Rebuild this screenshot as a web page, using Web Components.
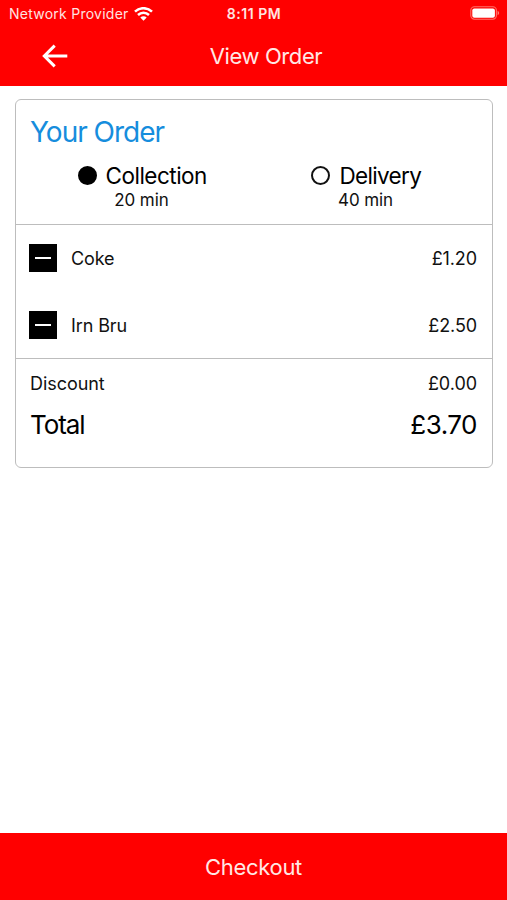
<!DOCTYPE html>
<html lang="en">
<head>
<meta charset="utf-8">
<title>View Order</title>
<style>
html, body { margin: 0; height: 100%; }
body { background: #fff; color: #111; font-family: Inter, "Liberation Sans", sans-serif; }
</style>
</head>
<body>
<order-screen></order-screen>
<script>
const define = (name, html) => customElements.define(name, class extends HTMLElement {
  constructor() {
    super();
    this.attachShadow({ mode: "open" }).innerHTML = html;
  }
});

define("status-bar", `
<style>
:host { display: grid; grid-template-columns: 1fr auto 1fr; align-items: center; height: 27px; padding: 0 7px 0 9px; color: #ffe3e0; font-size: 14px; line-height: 27px; }
.left { display: flex; align-items: center; gap: 5px; }
.left svg, .battery { margin-top: -1px; }
.carrier { letter-spacing: .25px; line-height: 26px; }
.time { font-weight: 600; font-size: 14px; letter-spacing: .55px; line-height: 28px; margin-left: -1px; }
.battery { justify-self: end; }
svg { display: block; }
</style>
<div class="left"><span class="carrier">Network Provider</span>
<svg width="19" height="14" viewBox="0 0 19 14" fill="none" stroke="#fff" stroke-width="2.5"><path d="M1 4.7C5.8 0 13.2 0 18 4.7M4 8c3.1-3 7.9-3 11 0"/><path d="M6.3 10.4c1.8-1.7 4.6-1.7 6.4 0L9.5 13.7z" fill="#fff" stroke="none"/></svg></div>
<span class="time">8:11 PM</span>
<svg class="battery" width="30" height="15" viewBox="0 0 30 15"><rect x=".8" y=".8" width="25.6" height="12.4" rx="3.6" fill="none" stroke="#ff7068" stroke-width="1.1"/><rect x="2.3" y="2.5" width="22.6" height="9.2" rx="2" fill="#fff"/><path d="M27.6 4.8c2 .8 2 3.6 0 4.4z" fill="#ff8078"/></svg>`);

define("nav-bar", `
<style>
:host { display: grid; grid-template-columns: 1fr auto 1fr; align-items: center; height: 59px; padding: 0 17px 0 42px; box-sizing: border-box; color: #ffe8e5; font-size: 22px; line-height: 59px; letter-spacing: -.4px; }
svg { display: block; margin-top: -2px; }
</style>
<svg width="26" height="24" viewBox="0 0 26 24" fill="none" stroke="#fff" stroke-width="3"><path d="M25.3 12H3M12.7 1.6L2.3 12l10.4 10.4"/></svg>
<span><slot></slot></span>`);

define("pick-option", `
<style>
:host { display: flex; flex-direction: column; align-items: center; color: #000; }
.row { display: flex; align-items: center; gap: 9.5px; font-size: 22.5px; line-height: 28px; letter-spacing: -.5px; }
.dot { width: 19px; height: 19px; box-sizing: border-box; border: 2px solid #111; border-radius: 50%; margin: -1px -.5px 0 .5px; }
:host([checked]) .dot { background: #000; border-color: #000; }
:host(:not([checked])) .name { letter-spacing: -.65px; }
.time { font-size: 17px; line-height: 21px; color: #111; letter-spacing: -.1px; padding-right: 1px; }
</style>
<div class="row"><span class="dot"></span><span class="name"><slot></slot></span></div>
<div class="time"><slot name="time"></slot></div>`);

define("order-item", `
<style>
:host { display: flex; align-items: center; height: 67px; font-size: 18px; padding: 0 15px 0 13px; letter-spacing: -.1px; }
.minus { width: 28px; height: 28px; background: #000; display: grid; place-items: center; margin: -1px 14px 0 0; }
.minus i { width: 16px; height: 2px; background: #fff; }
.name { flex: 1; }
</style>
<span class="minus"><i></i></span><span class="name"><slot></slot></span><span><slot name="price"></slot></span>`);

define("sum-row", `
<style>
:host { display: flex; justify-content: space-between; font-size: 18px; line-height: 36px; padding: 0 15px 0 14px; letter-spacing: -.05px; }
:host([total]) { font-size: 26px; line-height: 45px; color: #000; }
:host([total]) .label { letter-spacing: -1.1px; }
:host([total]) .price { letter-spacing: -.5px; }
</style>
<span class="label"><slot></slot></span><span class="price"><slot name="price"></slot></span>`);

define("order-card", `
<style>
:host { display: block; box-sizing: border-box; margin: 13px 14px 0 15px; height: 369px; border: 1px solid #bdbdbd; border-radius: 6px; }
h1 { margin: 0; padding: 14px 14px 0; font-size: 28px; font-weight: 400; line-height: 36px; letter-spacing: -1px; color: #168ddd; }
.options { display: flex; padding-top: 12px; height: 62px; }
.options > :first-child { margin-left: 61px; }
.options > :last-child { margin-left: 104px; }
.items { border: solid #bdbdbd; border-width: 1px 0; height: 133px; }
.sums { padding-top: 7px; }
</style>
<h1>Your Order</h1>
<div class="options">
<pick-option checked>Collection<span slot="time">20 min</span></pick-option>
<pick-option>Delivery<span slot="time">40 min</span></pick-option>
</div>
<div class="items">
<order-item>Coke<span slot="price">£1.20</span></order-item>
<order-item>Irn Bru<span slot="price">£2.50</span></order-item>
</div>
<div class="sums">
<sum-row>Discount<span slot="price">£0.00</span></sum-row>
<sum-row total>Total<span slot="price">£3.70</span></sum-row>
</div>`);

define("checkout-bar", `
<style>
:host { display: flex; align-items: center; justify-content: center; height: 67px; background: #f00; color: #ffe8e5; font-size: 22px; letter-spacing: -.3px; }
</style>
<span><slot></slot></span>`);

define("order-screen", `
<style>
:host { display: flex; flex-direction: column; height: 100vh; overflow: hidden; }
header { background: #f00; }
main { flex: 1; }
</style>
<header><status-bar></status-bar><nav-bar>View Order</nav-bar></header>
<main><order-card></order-card></main>
<checkout-bar>Checkout</checkout-bar>`);
</script>
</body>
</html>
